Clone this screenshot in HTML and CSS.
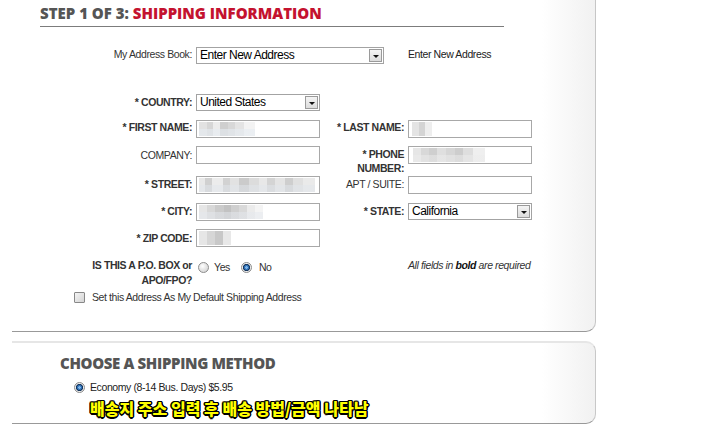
FILE: index.html
```html
<!DOCTYPE html>
<html>
<head>
<meta charset="utf-8">
<link rel="stylesheet" href="styles.css">
</head>
<body>
<div class="panel panel-info">
  <h1 class="step-title"><span>STEP 1 OF 3:</span> <span class="step-name">SHIPPING INFORMATION</span></h1>
  <div class="form">
    <div class="lbl plain top0">My Address Book:</div>
    <div class="span2"><div class="select w-addr"><span class="sel-text">Enter New Address</span><i class="arrow"></i></div></div>
    <div class="note top0">Enter New Address</div>

    <div class="lbl">* COUNTRY:</div>
    <div><div class="select"><span class="sel-text">United States</span><i class="arrow"></i></div></div>
    <div></div>
    <div></div>

    <div class="lbl top0">* FIRST NAME:</div>
    <div class="input"><span class="blur b-first"></span></div>
    <div class="lbl top0">* LAST NAME:</div>
    <div class="input"><span class="blur b-last"></span></div>

    <div class="lbl plain top2">COMPANY:</div>
    <div class="input"></div>
    <div class="lbl">* PHONE<br>NUMBER:</div>
    <div class="input"><span class="blur b-phone"></span></div>

    <div class="lbl">* STREET:</div>
    <div class="input"><span class="blur b-street"></span></div>
    <div class="lbl plain">APT / SUITE:</div>
    <div class="input"></div>

    <div class="lbl">* CITY:</div>
    <div class="input"><span class="blur b-city"></span></div>
    <div class="lbl">* STATE:</div>
    <div><div class="select"><span class="sel-text">California</span><i class="arrow"></i></div></div>

    <div class="lbl top2">* ZIP CODE:</div>
    <div class="input"><span class="blur b-zip"></span></div>
    <div></div>
    <div></div>

    <div class="lbl po">IS THIS A P.O. BOX or<br>APO/FPO?</div>
    <div class="radios"><i class="radio"></i><span class="r-yes">Yes</span><i class="radio on"></i><span class="r-no">No</span></div>
    <div class="req">All fields in <b>bold</b> are required</div>

    <div class="check-row"><i class="checkbox"></i><span>Set this Address As My Default Shipping Address</span></div>
  </div>
</div>

<div class="panel panel-method">
  <h2 class="method-title">CHOOSE A SHIPPING METHOD</h2>
  <div class="method-row"><i class="radio on"></i><span>Economy (8-14 Bus. Days) $5.95</span></div>
  <div class="kr-note">배송지 주소 입력 후 배송 방법/금액 나타남</div>
</div>
</body>
</html>
```

FILE: styles.css
```css
html, body {
  margin: 0;
  padding: 0;
  background: #fff;
}
body {
  width: 720px;
  height: 428px;
  overflow: hidden;
  font-family: "Liberation Sans", Arial, sans-serif;
  font-size: 10.5px;
  letter-spacing: -0.4px;
  color: #333;
}
.panel {
  margin-left: 12px;
  width: 584px;
  box-sizing: border-box;
  background: linear-gradient(to right, #fff 0, #fff 530px, #f1f1f1 583px);
}
.panel-info {
  border-right: 1px solid #c6c6c6;
  border-bottom: 1px solid #999;
  border-bottom-right-radius: 10px;
  padding: 0 0 28px 28px;
}
.step-title {
  margin: 0;
  width: 464px;
  padding: 3px 0 3px 0;
  height: 20px;
  font: 800 15px/20px "Open Sans", sans-serif;
  letter-spacing: 0;
  color: #555;
  border-bottom: 1px solid #7c7c7c;
  white-space: nowrap;
}
.step-name { color: #c4122f; }

.form {
  display: grid;
  grid-template-columns: 152px 124px 80px 124px;
  grid-template-rows: 47px 26px 26px 30px 27px 26px 29px 33px auto;
  column-gap: 4px;
  margin-top: 20px;
  align-items: start;
}
.lbl {
  text-align: right;
  font-weight: bold;
  line-height: 14px;
  padding-top: 1px;
  color: #333;
  white-space: nowrap;
}
.lbl.plain { font-weight: normal; }
.top0 { padding-top: 0; }
.top2 { padding-top: 2px; }
.lbl.po { line-height: 15px; padding-top: 0; }
.note { line-height: 14px; color: #222; }
.span2 { grid-column: span 2; }

.select {
  width: 124px;
  height: 17px;
  box-sizing: border-box;
  border: 1px solid #a3a3a3;
  background: #fff;
  display: flex;
  align-items: center;
  justify-content: space-between;
  padding: 0 1px 0 3px;
}
.select.w-addr { width: 188px; }
.sel-text {
  font-size: 12px;
  letter-spacing: -0.5px;
  line-height: 15px;
  color: #000;
  white-space: nowrap;
}
.arrow {
  width: 13px;
  height: 13px;
  box-sizing: border-box;
  border: 1px solid #9a9a9a;
  background: linear-gradient(#f4f4f4, #dcdcdc);
  display: flex;
  align-items: center;
  justify-content: center;
}
.arrow::after {
  content: "";
  border-left: 3px solid transparent;
  border-right: 3px solid transparent;
  border-top: 3px solid #111;
  margin-top: 1px;
}

.input {
  width: 124px;
  height: 18px;
  box-sizing: border-box;
  border: 1px solid #a8a8a8;
  background: #fff;
  display: flex;
  align-items: center;
  padding-left: 2px;
}
.blur {
  display: block;
  height: 14px;
}
.b-first {
  width: 56px;
  background:
    linear-gradient(to bottom, rgba(255,255,255,0) 0 7px, rgba(230,236,242,0.6) 7px 14px),
    linear-gradient(to right, #e2e2e2 0 8px, #d6d6d6 8px 14px, #ececec 14px 21px, #cfcfcf 21px 29px, #d8d8d8 29px 36px, #e4e4e4 36px 45px, #f3f3f3 45px 56px);
}
.b-last {
  width: 20px;
  margin-left: 1px;
  background: linear-gradient(to right, #e4e4e4 0 7px, #d4d4d4 7px 13px, #eeeeee 13px 20px);
}
.b-phone {
  width: 72px;
  margin-left: 2px;
  background:
    linear-gradient(to bottom, rgba(255,255,255,0) 0 7px, rgba(236,236,236,0.5) 7px 14px),
    linear-gradient(to right, #e6e6e6 0 8px, #d8d8d8 8px 16px, #cfcfcf 16px 24px, #dfdfdf 24px 33px, #d6d6d6 33px 42px, #cdcdcd 42px 50px, #dedede 50px 60px, #efefef 60px 72px);
}
.b-street {
  width: 116px;
  background:
    linear-gradient(to bottom, rgba(255,255,255,0) 0 7px, rgba(225,230,236,0.5) 7px 14px),
    linear-gradient(to right, #e8e8e8 0 6px, #d0d0d0 6px 13px, #ececec 13px 24px, #d2d2d2 24px 31px, #e2e2e2 31px 40px, #cbcbcb 40px 50px, #dcdcdc 50px 60px, #e8e8e8 60px 68px, #d4d4d4 68px 76px, #e4e4e4 76px 86px, #cecece 86px 94px, #e0e0e0 94px 104px, #eaeaea 104px 116px);
}
.b-city {
  width: 64px;
  background:
    linear-gradient(to bottom, rgba(255,255,255,0) 0 7px, rgba(228,232,238,0.5) 7px 14px),
    linear-gradient(to right, #e6e6e6 0 8px, #d8d8d8 8px 16px, #cbcbcb 16px 25px, #c2c2c2 25px 32px, #cfcfcf 32px 40px, #d9d9d9 40px 48px, #ebebeb 48px 56px, #f4f4f4 56px 64px);
}
.b-zip {
  width: 32px;
  background: linear-gradient(to right, #e6e6e6 0 8px, #d6d6d6 8px 16px, #c8c8c8 16px 24px, #e8e8e8 24px 32px);
}

.radios {
  grid-column: span 2;
  display: flex;
  align-items: center;
  padding-left: 2px;
  margin-top: 2px;
  line-height: 14px;
}
.radio {
  display: block;
  width: 11px;
  height: 11px;
  box-sizing: border-box;
  border-radius: 50%;
  border: 1px solid #8c8c8c;
  background: radial-gradient(circle at 40% 35%, #ffffff 0, #e6e6e6 45%, #cfcfcf 100%);
  flex: none;
}
.radio.on {
  background: radial-gradient(circle at 50% 50%, #7fb6ea 0 1px, #2c6db3 1.6px 2.4px, #17375e 2.8px 3.4px, #f0f0f0 3.8px, #d2d2d2 100%);
}
.r-yes { margin-left: 5px; margin-right: 11px; }
.r-no { margin-left: 7px; }
.req {
  font-style: italic;
  line-height: 14px;
  padding-top: 0;
  color: #333;
  white-space: nowrap;
}
.req b { font-style: italic; color: #111; }

.check-row {
  grid-column: 1 / -1;
  display: flex;
  align-items: center;
  padding-left: 34px;
  line-height: 12px;
}
.checkbox {
  display: block;
  width: 11px;
  height: 11px;
  box-sizing: border-box;
  border: 1px solid #888;
  border-radius: 1px;
  background: linear-gradient(135deg, #f4f4f4, #d4d4d4);
  margin-right: 7px;
}

.panel-method {
  margin-top: 9px;
  height: 83px;
  border-top: 2px solid #e6e6e6;
  border-right: 1px solid #c8c8c8;
  border-bottom: 1px solid #999;
  border-top-right-radius: 10px;
  border-bottom-right-radius: 10px;
  padding: 10px 0 0 48px;
}
.method-title {
  margin: 0;
  font: 800 15px/20px "Open Sans", sans-serif;
  letter-spacing: -0.35px;
  color: #555;
  white-space: nowrap;
}
.method-row {
  display: flex;
  align-items: center;
  margin-top: 7px;
  padding-left: 14px;
  line-height: 14px;
  color: #222;
}
.method-row .radio { margin-right: 5px; }
.kr-note {
  margin-top: 4px;
  padding-left: 30px;
  font-family: "Noto Sans CJK KR", sans-serif;
  font-weight: 900;
  font-size: 16px;
  letter-spacing: 0;
  line-height: 20px;
  color: #ffff00;
  white-space: nowrap;
  text-shadow:
    -1px -1px 0 #000, 1px -1px 0 #000, -1px 1px 0 #000, 1px 1px 0 #000,
    0 -1.5px 0 #000, 0 1.5px 0 #000, -1.5px 0 0 #000, 1.5px 0 0 #000;
}
```
